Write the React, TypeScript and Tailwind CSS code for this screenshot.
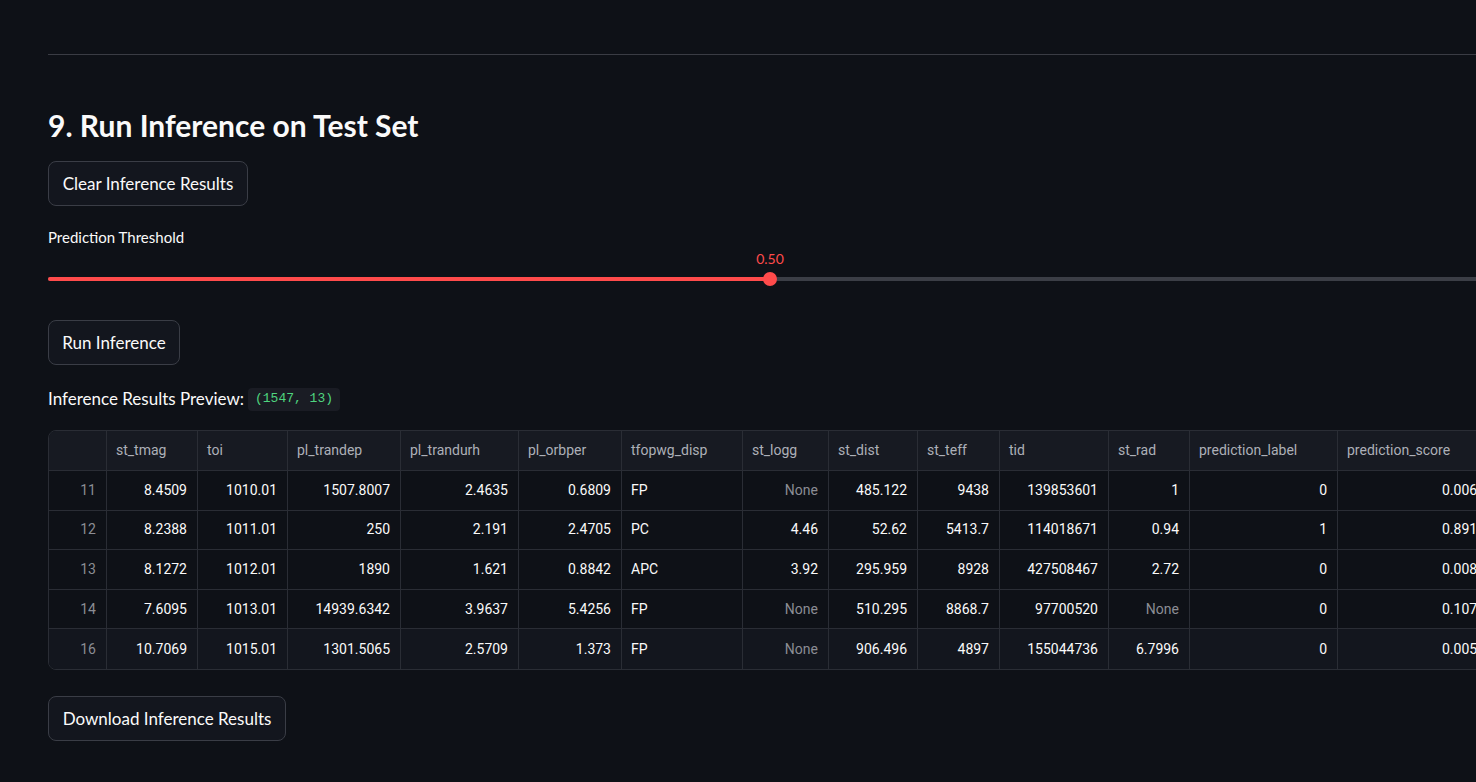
import React from "react";

const headers = [
  "",
  "st_tmag",
  "toi",
  "pl_trandep",
  "pl_trandurh",
  "pl_orbper",
  "tfopwg_disp",
  "st_logg",
  "st_dist",
  "st_teff",
  "tid",
  "st_rad",
  "prediction_label",
  "prediction_score",
];

const rows: string[][] = [
  ["11", "8.4509", "1010.01", "1507.8007", "2.4635", "0.6809", "FP", "None", "485.122", "9438", "139853601", "1", "0", "0.0061"],
  ["12", "8.2388", "1011.01", "250", "2.191", "2.4705", "PC", "4.46", "52.62", "5413.7", "114018671", "0.94", "1", "0.8911"],
  ["13", "8.1272", "1012.01", "1890", "1.621", "0.8842", "APC", "3.92", "295.959", "8928", "427508467", "2.72", "0", "0.0081"],
  ["14", "7.6095", "1013.01", "14939.6342", "3.9637", "5.4256", "FP", "None", "510.295", "8868.7", "97700520", "None", "0", "0.1071"],
  ["16", "10.7069", "1015.01", "1301.5065", "2.5709", "1.373", "FP", "None", "906.496", "4897", "155044736", "6.7996", "0", "0.0051"],
];

function Btn({ children, w }: { children: React.ReactNode; w: string }) {
  return (
    <button
      className={`h-[45px] ${w} rounded-[8px] border border-[#3a3d46] bg-[#13161e] text-[17px] text-[#fafafa] flex items-center justify-center`}
    >
      {children}
    </button>
  );
}

export default function App() {
  const font = { fontFamily: "Lato, 'Noto Sans', sans-serif" };
  const tableFont = { fontFamily: "Roboto, 'Noto Sans', sans-serif" };
  return (
    <div
      className="w-[1476px] h-[782px] overflow-hidden bg-[#0e1117] text-[#fafafa]"
      style={font}
    >
      <div className="w-[1444px] ml-[48px] flex flex-col">
        <div className="h-[54px]" />
        <div className="h-px bg-[#3a3c44]" />
        <div className="h-[50px]" />
        <h3 className="h-[40px] flex items-center text-[30px] font-bold leading-none">
          9. Run Inference on Test Set
        </h3>
        <div className="h-[16px]" />
        <div className="flex">
          <Btn w="w-[200px]">Clear Inference Results</Btn>
        </div>
        <div className="h-[22px]" />
        <div className="h-[18px] flex items-center text-[15px] text-[#fafafa]">
          Prediction Threshold
        </div>
        <div className="h-[3px]" />
        <div className="relative h-[50px]">
          <div className="absolute left-[722px] top-[-1px] -translate-x-1/2 text-[14px] text-[#ff4b4b]">
            0.50
          </div>
          <div className="absolute left-0 right-0 top-[28px] h-[4px] rounded-full bg-[#3b3e46]" />
          <div className="absolute left-0 w-[722px] top-[28px] h-[4px] rounded-full bg-[#ff4b4b]" />
          <div className="absolute left-[715px] top-[23px] w-[14px] h-[14px] rounded-full bg-[#ff4b4b]" />
        </div>
        <div className="h-[21px]" />
        <div className="flex">
          <Btn w="w-[132px]">Run Inference</Btn>
        </div>
        <div className="h-[22px]" />
        <div className="h-[24px] flex items-center gap-[4px] text-[17px]">
          <span>Inference Results Preview:</span>
          <span
            className="h-[23px] px-[7px] rounded-[4px] bg-[#1a1c24] text-[13px] text-[#4fd47f] flex items-center"
            style={{ fontFamily: "'Liberation Mono', 'DejaVu Sans Mono', monospace" }}
          >
            (1547, 13)
          </span>
        </div>
        <div className="h-[19px]" />
        <div
          className="w-[1500px] rounded-[8px] border border-[#2a2d35] overflow-hidden"
          style={tableFont}
        >
          <div className="grid grid-cols-[58px_91px_90px_113px_118px_103px_121px_86px_89px_82px_109px_81px_148px_158px] bg-[#171a22] h-[40px] border-b border-[#2a2d35]">
            {headers.map((h, i) => (
              <div
                key={i}
                className="border-r border-[#2a2d35] flex items-center pl-[9px] text-[14px] text-[#adb0b8] whitespace-nowrap"
              >
                {h}
              </div>
            ))}
          </div>
          {rows.map((r, ri) => (
            <div
              key={ri}
              className={`grid grid-cols-[58px_91px_90px_113px_118px_103px_121px_86px_89px_82px_109px_81px_148px_158px] h-[39.6px] ${
                ri === rows.length - 1 ? "bg-[#13161e]" : "bg-[#0e1117] border-b border-[#2a2d35]"
              }`}
            >
              {r.map((c, ci) => {
                const left = ci === 6;
                const muted = ci === 0 || c === "None";
                return (
                  <div
                    key={ci}
                    className={`border-r border-[#2a2d35] flex items-center text-[14px] whitespace-nowrap ${
                      left ? "justify-start pl-[9px]" : "justify-end pr-[10px]"
                    } ${muted ? "text-[#8b8d94]" : "text-[#fafafa]"} ${
                      c === "None" ? "text-[#6f727a]" : ""
                    }`}
                  >
                    {c}
                  </div>
                );
              })}
            </div>
          ))}
        </div>
        <div className="h-[26px]" />
        <div className="flex">
          <Btn w="w-[238px]">Download Inference Results</Btn>
        </div>
      </div>
    </div>
  );
}
